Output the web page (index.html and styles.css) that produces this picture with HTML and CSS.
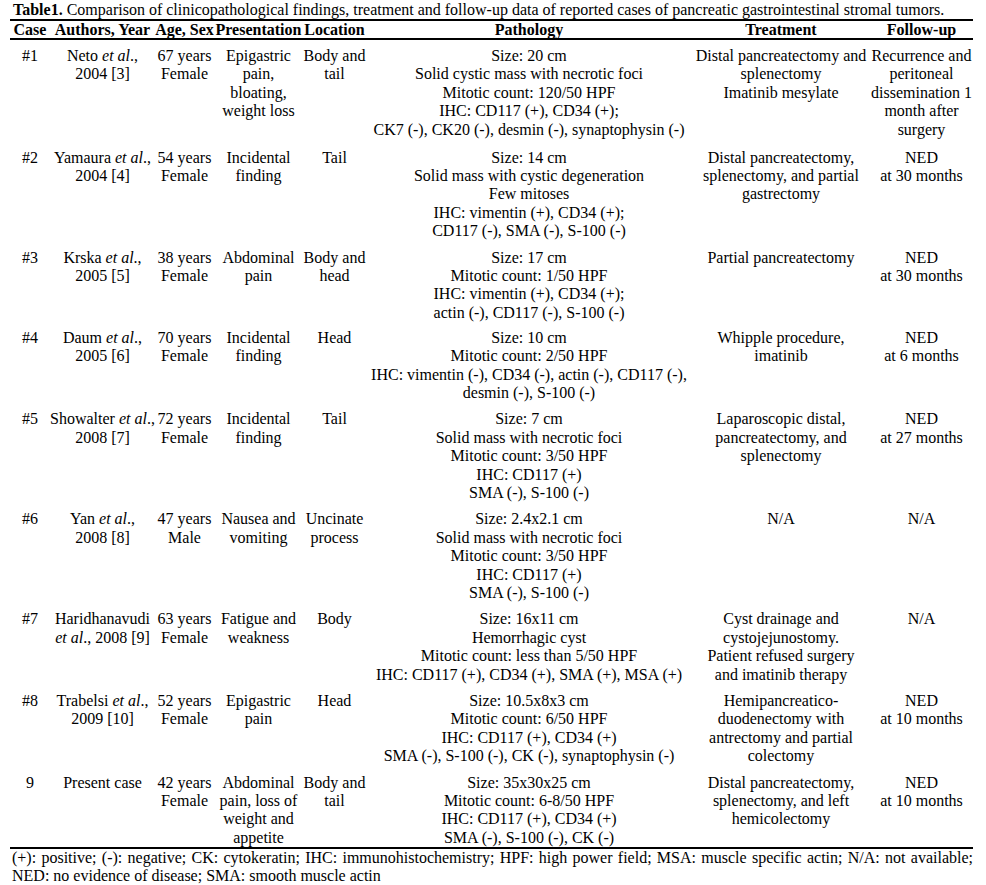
FILE: index.html
```html
<!DOCTYPE html>
<html>
<head>
<meta charset="utf-8">
<link rel="stylesheet" href="styles.css">
</head>
<body>
<div class="page">
  <div class="title"><b>Table1.</b> Comparison of clinicopathological findings, treatment and follow-up data of reported cases of pancreatic gastrointestinal stromal tumors.</div>
  <table class="data">
    <colgroup>
      <col class="c-case"><col class="c-auth"><col class="c-age"><col class="c-pres"><col class="c-loc"><col class="c-path"><col class="c-treat"><col class="c-fu">
    </colgroup>
    <thead>
      <tr><th>Case</th><th>Authors, Year</th><th>Age, Sex</th><th>Presentation</th><th>Location</th><th>Pathology</th><th>Treatment</th><th>Follow-up</th></tr>
    </thead>
    <tbody>
      <tr class="first">
        <td>#1</td>
        <td>Neto <i>et al</i>.,<br>2004 [3]</td>
        <td>67 years<br>Female</td>
        <td>Epigastric pain, bloating, weight loss</td>
        <td>Body and<br>tail</td>
        <td>Size: 20 cm<br>Solid cystic mass with necrotic foci<br>Mitotic count: 120/50 HPF<br>IHC: CD117 (+), CD34 (+);<br>CK7 (-), CK20 (-), desmin (-), synaptophysin (-)</td>
        <td>Distal pancreatectomy and<br>splenectomy<br>Imatinib mesylate</td>
        <td>Recurrence and peritoneal dissemination 1 month after surgery</td>
      </tr>
      <tr>
        <td>#2</td>
        <td>Yamaura <i>et al</i>.,<br>2004 [4]</td>
        <td>54 years<br>Female</td>
        <td>Incidental<br>finding</td>
        <td>Tail</td>
        <td>Size: 14 cm<br>Solid mass with cystic degeneration<br>Few mitoses<br>IHC: vimentin (+), CD34 (+);<br>CD117 (-), SMA (-), S-100 (-)</td>
        <td>Distal pancreatectomy,<br>splenectomy, and partial<br>gastrectomy</td>
        <td>NED<br>at 30 months</td>
      </tr>
      <tr class="tight">
        <td>#3</td>
        <td>Krska <i>et al</i>.,<br>2005 [5]</td>
        <td>38 years<br>Female</td>
        <td>Abdominal<br>pain</td>
        <td>Body and<br>head</td>
        <td>Size: 17 cm<br>Mitotic count: 1/50 HPF<br>IHC: vimentin (+), CD34 (+);<br>actin (-), CD117 (-), S-100 (-)</td>
        <td>Partial pancreatectomy</td>
        <td>NED<br>at 30 months</td>
      </tr>
      <tr>
        <td>#4</td>
        <td>Daum <i>et al</i>.,<br>2005 [6]</td>
        <td>70 years<br>Female</td>
        <td>Incidental<br>finding</td>
        <td>Head</td>
        <td>Size: 10 cm<br>Mitotic count: 2/50 HPF<br>IHC: vimentin (-), CD34 (-), actin (-), CD117 (-),<br>desmin (-), S-100 (-)</td>
        <td>Whipple procedure,<br>imatinib</td>
        <td>NED<br>at 6 months</td>
      </tr>
      <tr>
        <td>#5</td>
        <td>Showalter <i>et al</i>.,<br>2008 [7]</td>
        <td>72 years<br>Female</td>
        <td>Incidental<br>finding</td>
        <td>Tail</td>
        <td>Size: 7 cm<br>Solid mass with necrotic foci<br>Mitotic count: 3/50 HPF<br>IHC: CD117 (+)<br>SMA (-), S-100 (-)</td>
        <td>Laparoscopic distal,<br>pancreatectomy, and<br>splenectomy</td>
        <td>NED<br>at 27 months</td>
      </tr>
      <tr>
        <td>#6</td>
        <td>Yan <i>et al</i>.,<br>2008 [8]</td>
        <td>47 years<br>Male</td>
        <td>Nausea and<br>vomiting</td>
        <td>Uncinate<br>process</td>
        <td>Size: 2.4x2.1 cm<br>Solid mass with necrotic foci<br>Mitotic count: 3/50 HPF<br>IHC: CD117 (+)<br>SMA (-), S-100 (-)</td>
        <td>N/A</td>
        <td>N/A</td>
      </tr>
      <tr>
        <td>#7</td>
        <td>Haridhanavudi<br><i>et al</i>., 2008 [9]</td>
        <td>63 years<br>Female</td>
        <td>Fatigue and<br>weakness</td>
        <td>Body</td>
        <td>Size: 16x11 cm<br>Hemorrhagic cyst<br>Mitotic count: less than 5/50 HPF<br>IHC: CD117 (+), CD34 (+), SMA (+), MSA (+)</td>
        <td>Cyst drainage and<br>cystojejunostomy.<br>Patient refused surgery<br>and imatinib therapy</td>
        <td>N/A</td>
      </tr>
      <tr>
        <td>#8</td>
        <td>Trabelsi <i>et al</i>.,<br>2009 [10]</td>
        <td>52 years<br>Female</td>
        <td>Epigastric<br>pain</td>
        <td>Head</td>
        <td>Size: 10.5x8x3 cm<br>Mitotic count: 6/50 HPF<br>IHC: CD117 (+), CD34 (+)<br>SMA (-), S-100 (-), CK (-), synaptophysin (-)</td>
        <td>Hemipancreatico-<br>duodenectomy with<br>antrectomy and partial<br>colectomy</td>
        <td>NED<br>at 10 months</td>
      </tr>
      <tr class="last">
        <td>9</td>
        <td>Present case</td>
        <td>42 years<br>Female</td>
        <td>Abdominal<br>pain, loss of<br>weight and<br>appetite</td>
        <td>Body and<br>tail</td>
        <td>Size: 35x30x25 cm<br>Mitotic count: 6-8/50 HPF<br>IHC: CD117 (+), CD34 (+)<br>SMA (-), S-100 (-), CK (-)</td>
        <td>Distal pancreatectomy,<br>splenectomy, and left<br>hemicolectomy</td>
        <td>NED<br>at 10 months</td>
      </tr>
    </tbody>
  </table>
  <p class="notes">(+): positive; (-): negative; CK: cytokeratin; IHC: immunohistochemistry; HPF: high power field; MSA: muscle specific actin; N/A: not available; NED: no evidence of disease; SMA: smooth muscle actin</p>
</div>
</body>
</html>
```

FILE: styles.css
```css
html, body {
  margin: 0;
  padding: 0;
  background: #ffffff;
}
body {
  font-family: "Liberation Serif", "Times New Roman", serif;
  font-size: 16px;
  color: #000000;
}
.page {
  width: 963px;
  padding: 1px 0 0 10px;
}
.title {
  line-height: 18px;
  padding-left: 3px;
  white-space: nowrap;
  border-bottom: 2px solid #000;
}
.data {
  width: 963px;
  border-collapse: collapse;
  table-layout: fixed;
  font-size: 16px;
}
.c-case { width: 40px; }
.c-auth { width: 105px; }
.c-age { width: 59px; }
.c-pres { width: 89px; }
.c-loc { width: 63px; }
.c-path { width: 326px; }
.c-treat { width: 178px; }
.c-fu { width: 103px; }
.data th {
  font-weight: bold;
  line-height: 17px;
  padding: 0;
  text-align: center;
  border-bottom: 2px solid #000;
  white-space: nowrap;
}
.data td {
  vertical-align: top;
  text-align: center;
  line-height: 18.4px;
  padding: 0 0 8px;
}
.data tr.first td {
  padding-top: 7px;
  padding-bottom: 9.5px;
}
.data tr.tight td {
  padding-bottom: 6.5px;
}
.data tr.last td {
  padding-bottom: 0;
  border-bottom: 2px solid #000;
}
.notes {
  margin: 0;
  line-height: 18px;
  padding-left: 2px;
  text-align: justify;
}
```
